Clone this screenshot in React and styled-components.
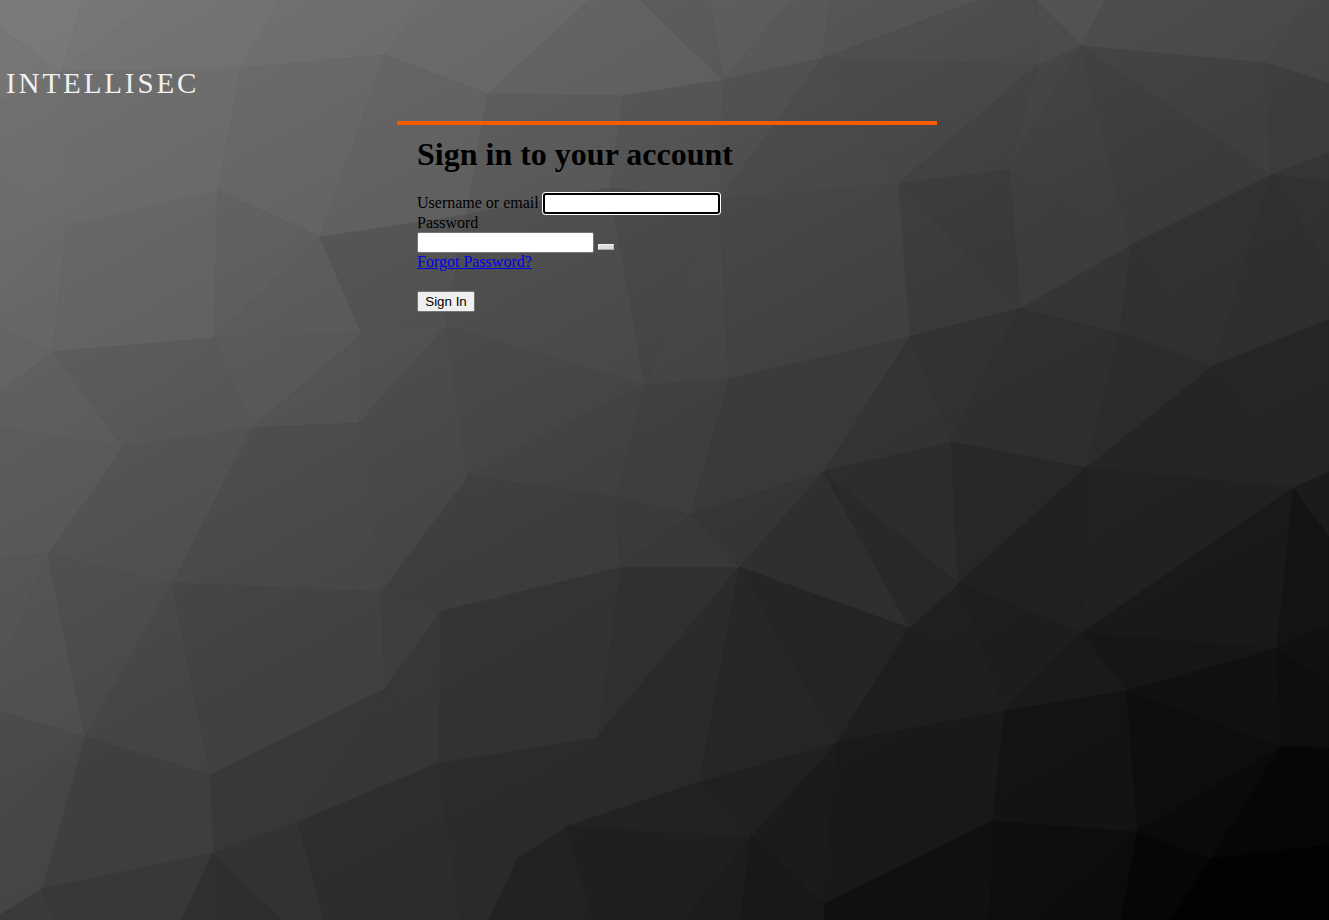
import React from 'react';
import styled, { createGlobalStyle } from 'styled-components';

const GlobalStyle = createGlobalStyle`
  html, body {
    margin: 0;
    padding: 0;
    height: 100%;
    overflow: hidden;
  }
  body {
    font-family: "Liberation Serif", "Times New Roman", serif;
    font-size: 16px;
    color: #000;
  }
`;

const Page = styled.div`
  position: relative;
  min-height: 100vh;
  overflow: hidden;
  background: #333;
`;

const Backdrop = styled.svg`
  position: absolute;
  top: 0;
  left: 0;
  width: 100%;
  height: 100%;
`;

const Content = styled.div`
  position: relative;
  padding-top: 66px;
`;

const Logo = styled.div`
  margin-left: 6px;
  height: 34px;
  line-height: 34px;
  font-size: 29px;
  letter-spacing: 2.9px;
  color: #f0f0f0;
`;

const Card = styled.section`
  box-sizing: border-box;
  width: 540px;
  margin: 21px 0 0 397px;
  padding: 0 20px;
  border-top: 4px solid #f85a00;
`;

const Title = styled.h1`
  margin: 11px 0 21px;
  font-size: 32px;
  line-height: 37px;
  font-weight: bold;
`;

const Field = styled.input`
  box-sizing: border-box;
  width: 177px;
  height: 21px;
  padding: 1px 2px;
  background: #fff;
  vertical-align: ${({ $focused }) => ($focused ? 'middle' : '1px')};
  margin: ${({ $focused }) => ($focused ? '-2px 0 0' : '0')};
  border: ${({ $focused }) => ($focused ? '2px solid #000' : '1px solid #767676')};
  border-radius: ${({ $focused }) => ($focused ? '3px' : '2px')};
  box-shadow: ${({ $focused }) => ($focused ? '0 0 0 1px #fff' : 'none')};
  outline: none;
`;

const Reveal = styled.button`
  box-sizing: border-box;
  width: 16px;
  height: 6px;
  margin-left: 4px;
  padding: 0;
  vertical-align: -1px;
  background: #dcdcdc;
  border: 1px solid;
  border-color: #f2f2f2 #bdbdbd #a8a8a8 #f2f2f2;
`;

const ForgotLink = styled.a`
  color: #0000ee;
  text-decoration: underline;
`;

const Actions = styled.div`
  margin-top: 20px;
`;

const SubmitButton = styled.button`
  box-sizing: border-box;
  width: 58px;
  height: 21px;
  padding: 0;
  background: #efefef;
  border: 1px solid #767676;
  border-radius: 2px;
  font-family: "Liberation Sans", Arial, sans-serif;
  font-size: 13.33px;
  color: #000;
`;

// [grey at the facet centre, ...x, y pairs]
const facets = [
  [0x7a, 0,0, 83,0, 61,72, 0,28],
  [0x76, 83,0, 152,0, 61,72],
  [0x73, 152,0, 280,0, 241,68, 61,72],
  [0x6e, 280,0, 426,0, 385,55, 241,68],
  [0x6a, 426,0, 589,0, 488,94, 385,55],
  [0x62, 589,0, 640,0, 723,80, 623,96, 488,94],
  [0x75, 0,28, 61,72, 0,100],
  [0x6f, 0,100, 61,72, 67,226, 0,173],
  [0x6c, 61,72, 241,68, 218,191, 67,226],
  [0x67, 241,68, 385,55, 320,237, 218,191],
  [0x62, 385,55, 488,94, 466,215, 320,237],
  [0x5a, 488,94, 623,96, 610,188, 466,215],
  [0x6c, 0,173, 67,226, 0,293],
  [0x65, 67,226, 218,191, 214,338, 53,352],
  [0x68, 0,293, 67,226, 53,352, 0,328],
  [0x60, 218,191, 320,237, 214,338],
  [0x5b, 320,237, 362,334, 214,338],
  [0x52, 320,237, 466,215, 446,326, 362,334],
  [0x64, 0,328, 53,352, 0,393],
  [0x5f, 0,393, 53,352, 123,447, 0,428],
  [0x5a, 53,352, 214,338, 123,447],
  [0x57, 214,338, 252,428, 123,447],
  [0x59, 214,338, 362,334, 252,428],
  [0x53, 362,334, 359,423, 252,428],
  [0x51, 362,334, 446,326, 359,423],
  [0x4a, 446,326, 468,476, 359,423],
  [0x46, 446,326, 645,385, 468,476],
  [0x41, 468,476, 645,385, 616,497],
  [0x53, 623,96, 723,80, 720,200, 610,188],
  [0x4c, 466,215, 610,188, 645,385, 446,326],
  [0x47, 610,188, 720,200, 645,385],
  [0x46, 720,200, 729,379, 645,385],
  [0x5a, 640,0, 710,0, 723,80],
  [0x5c, 710,0, 792,0, 723,80],
  [0x58, 792,0, 830,0, 823,58, 723,80],
  [0x54, 830,0, 979,0, 823,58],
  [0x4c, 979,0, 1036,0, 1038,65, 823,58],
  [0x52, 1036,0, 1106,0, 1081,46],
  [0x4c, 1036,0, 1081,46, 1038,65],
  [0x4b, 1106,0, 1212,0, 1265,63, 1081,46],
  [0x4a, 1212,0, 1307,0, 1265,63],
  [0x46, 1307,0, 1329,0, 1329,83, 1265,63],
  [0x4f, 723,80, 823,58, 720,200],
  [0x49, 823,58, 898,184, 720,200],
  [0x47, 823,58, 1038,65, 898,184],
  [0x40, 1038,65, 1009,170, 898,184],
  [0x43, 1038,65, 1081,46, 1009,170],
  [0x3f, 1081,46, 1131,245, 1009,170],
  [0x40, 1081,46, 1265,63, 1271,175],
  [0x3b, 1081,46, 1271,175, 1131,245],
  [0x3b, 1265,63, 1329,83, 1329,153, 1271,175],
  [0x34, 1271,175, 1329,153, 1329,182],
  [0x2f, 1271,175, 1329,182, 1329,267],
  [0x2d, 1271,175, 1329,267, 1329,320, 1213,366],
  [0x30, 1271,175, 1213,366, 1131,245],
  [0x2e, 1131,245, 1213,366, 1119,333],
  [0x33, 1131,245, 1119,333, 1020,308],
  [0x3b, 1009,170, 1131,245, 1020,308],
  [0x39, 898,184, 1009,170, 1020,308],
  [0x3a, 898,184, 1020,308, 910,337],
  [0x43, 720,200, 898,184, 910,337, 729,379],
  [0x39, 729,379, 910,337, 823,472, 690,515],
  [0x30, 910,337, 1020,308, 951,442],
  [0x32, 910,337, 951,442, 823,472],
  [0x2d, 1020,308, 1119,333, 1086,468, 951,442],
  [0x2a, 1119,333, 1213,366, 1086,468],
  [0x22, 1213,366, 1293,488, 1086,468],
  [0x24, 1213,366, 1329,320, 1329,472, 1293,488],
  [0x19, 1293,488, 1329,472, 1329,537],
  [0x11, 1293,488, 1329,537, 1329,625, 1276,649],
  [0x1f, 1086,468, 1293,488, 1081,633],
  [0x17, 1293,488, 1276,649, 1081,633],
  [0x26, 951,442, 1086,468, 958,584],
  [0x2b, 823,472, 951,442, 958,584],
  [0x1e, 1086,468, 1081,633, 958,584],
  [0x1b, 958,584, 1081,633, 1004,711],
  [0x1d, 909,628, 958,584, 1004,711],
  [0x27, 823,472, 958,584, 909,628],
  [0x2d, 739,567, 823,472, 909,628],
  [0x34, 690,515, 823,472, 739,567],
  [0x23, 739,567, 909,628, 837,742],
  [0x1c, 909,628, 1004,711, 837,742],
  [0x14, 1081,633, 1276,649, 1126,691],
  [0x18, 1081,633, 1126,691, 1004,711],
  [0x0e, 1276,649, 1329,625, 1329,683],
  [0x0c, 1276,649, 1329,683, 1329,748, 1280,747],
  [0x0e, 1276,649, 1280,747, 1126,691],
  [0x0c, 1126,691, 1280,747, 1137,832],
  [0x12, 1004,711, 1126,691, 1137,832, 992,821],
  [0x18, 837,742, 1004,711, 992,821, 824,904],
  [0x04, 1280,747, 1329,748, 1329,845, 1210,859],
  [0x08, 1280,747, 1210,859, 1137,832],
  [0x00, 1210,859, 1329,845, 1329,920, 1170,920],
  [0x04, 1137,832, 1210,859, 1170,920, 1120,920],
  [0x0a, 1137,832, 1120,920, 1040,920],
  [0x0c, 992,821, 1137,832, 1040,920, 989,920],
  [0x0f, 824,904, 992,821, 989,920, 824,920],
  [0x1a, 751,837, 837,742, 824,904],
  [0x1f, 699,782, 837,742, 751,837],
  [0x25, 739,567, 837,742, 699,782],
  [0x2f, 621,567, 739,567, 597,737],
  [0x29, 739,567, 699,782, 566,827, 597,737],
  [0x21, 566,827, 699,782, 751,837],
  [0x1e, 566,827, 751,837, 684,920, 593,920],
  [0x1b, 684,920, 751,837, 741,920],
  [0x17, 751,837, 824,904, 824,920, 741,920],
  [0x21, 566,827, 593,920, 488,920, 518,857],
  [0x2a, 438,763, 597,737, 566,827, 518,857, 488,920, 460,920],
  [0x32, 441,611, 621,567, 597,737, 438,763],
  [0x3c, 616,497, 621,567, 441,611, 468,476],
  [0x3d, 468,476, 441,611, 381,592],
  [0x47, 359,423, 468,476, 381,592],
  [0x4a, 252,428, 359,423, 381,592, 172,583],
  [0x52, 123,447, 252,428, 172,583, 48,554],
  [0x5a, 0,428, 123,447, 48,554, 0,559],
  [0x56, 0,559, 48,554, 0,673],
  [0x52, 0,673, 48,554, 85,737, 0,712],
  [0x4d, 48,554, 172,583, 85,737],
  [0x46, 172,583, 210,775, 85,737],
  [0x41, 172,583, 381,592, 385,689, 210,775],
  [0x3d, 381,592, 441,611, 385,689],
  [0x37, 441,611, 438,763, 385,689],
  [0x36, 385,689, 438,763, 298,822],
  [0x38, 210,775, 385,689, 298,822, 213,853],
  [0x3f, 85,737, 210,775, 213,853, 42,889],
  [0x4a, 0,712, 85,737, 0,820],
  [0x47, 0,820, 85,737, 42,889, 0,915],
  [0x3a, 0,915, 42,889, 57,920, 0,920],
  [0x38, 42,889, 213,853, 182,920, 57,920],
  [0x2f, 213,853, 218,920, 182,920],
  [0x2d, 213,853, 282,920, 218,920],
  [0x32, 213,853, 298,822, 324,920, 282,920],
  [0x2d, 298,822, 438,763, 460,920, 324,920],
  [0x3e, 645,385, 729,379, 690,515, 616,497],
  [0x3a, 616,497, 690,515, 621,567],
  [0x38, 621,567, 690,515, 739,567],
];

// a faint sheen over the flat facets; the fill is corrected for it at the centre
const SHEEN = 0.15;
const sheenAt = (x, y) => 1 - (2 * (x * 0.479 + y * 0.878)) / 1444;

// overall falloff from top left to bottom right, facets are pulled a bit toward it
const falloff = (x, y) => Math.max(0, 124 - (52 * x) / 1329 - (66 * y) / 920);

const Facet = ({ grey, coords }) => {
  let cx = 0;
  let cy = 0;
  const points = [];
  for (let i = 0; i < coords.length; i += 2) {
    cx += coords[i];
    cy += coords[i + 1];
    points.push(`${coords[i]},${coords[i + 1]}`);
  }
  cx /= coords.length / 2;
  cy /= coords.length / 2;
  const base = falloff(cx, cy);
  const target = base + 0.85 * (grey - base);
  const s = SHEEN * sheenAt(cx, cy);
  const g = s > 0 ? (target - 255 * s) / (1 - s) : target / (1 + s);
  const v = Math.max(0, Math.round(g));
  const fill = `rgb(${v},${v},${v})`;
  return <polygon points={points.join(' ')} fill={fill} stroke={fill} strokeWidth="0.6" />;
};

export default function App() {
  return (
    <>
      <GlobalStyle />
      <Page>
        <Backdrop viewBox="0 0 1329 920" preserveAspectRatio="none" aria-hidden="true">
          <defs>
            <linearGradient id="sheen" gradientUnits="userSpaceOnUse" x1="0" y1="0" x2="692" y2="1268">
              <stop offset="0" stopColor="#fff" stopOpacity={SHEEN} />
              <stop offset="0.5" stopColor="#fff" stopOpacity="0" />
              <stop offset="0.5" stopColor="#000" stopOpacity="0" />
              <stop offset="1" stopColor="#000" stopOpacity={SHEEN} />
            </linearGradient>
          </defs>
          {facets.map(([grey, ...coords], i) => (
            <Facet key={i} grey={grey} coords={coords} />
          ))}
          <rect width="1329" height="920" fill="url(#sheen)" />
        </Backdrop>
        <Content>
          <Logo>INTELLISEC</Logo>
          <Card>
            <Title>Sign in to your account</Title>
            <form onSubmit={(e) => e.preventDefault()}>
              <label htmlFor="username">Username or email</label>{' '}
              <Field id="username" type="text" $focused />
              <br />
              <label htmlFor="password">Password</label>
              <br />
              <Field id="password" type="password" />
              <Reveal type="button" aria-label="Show password" />
              <br />
              <ForgotLink href="#">Forgot Password?</ForgotLink>
              <Actions>
                <SubmitButton type="submit">Sign In</SubmitButton>
              </Actions>
            </form>
          </Card>
        </Content>
      </Page>
    </>
  );
}
